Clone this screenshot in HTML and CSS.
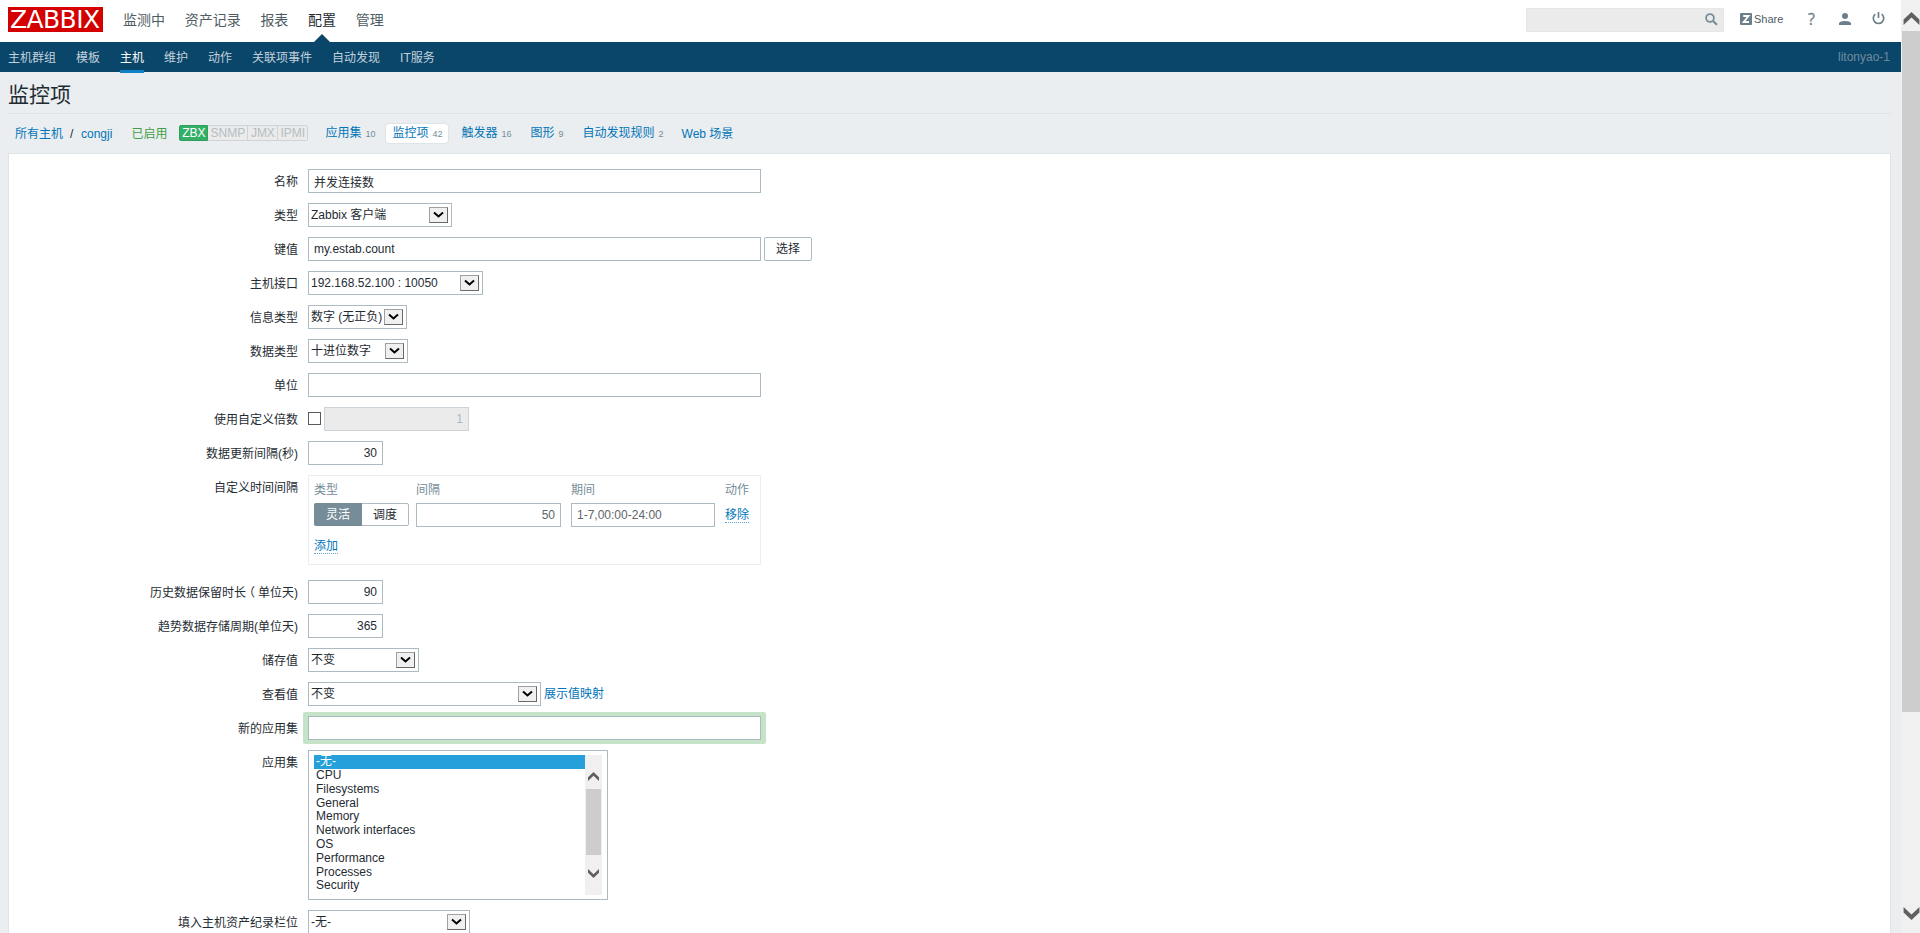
FILE: index.html
```html
<!DOCTYPE html>
<html lang="zh-CN">
<head>
    <meta charset="utf-8">
    <title>监控项</title>
    <link rel="stylesheet" href="styles.css">
</head>
<body>
    <svg width="0" height="0" class="defs">
        <symbol id="arrow" viewBox="0 0 11 8"><path d="M1 1.5l4.5 4 4.5-4" fill="none" stroke="#000" stroke-width="2"/></symbol>
        <symbol id="up" viewBox="0 0 11 9"><path d="M0 5.2L5.5 0 11 5.2V9L5.5 3.8 0 9z" fill="#606060"/></symbol>
        <symbol id="down" viewBox="0 0 11 9"><path d="M0 3.8L5.5 9 11 3.8V0L5.5 5.2 0 0z" fill="#606060"/></symbol>
    </svg>

    <div class="page">
        <header class="header">
            <a class="logo">ZABBIX</a>
            <nav class="top-nav">
                <a>监测中</a>
                <a>资产记录</a>
                <a>报表</a>
                <a class="selected">配置</a>
                <a>管理</a>
            </nav>
            <div class="search">
                <svg width="13" height="13" viewBox="0 0 13 13"><circle cx="5" cy="5" r="3.9" fill="none" stroke="#768d99" stroke-width="1.8"/><path d="M8 8l4 3.8" stroke="#768d99" stroke-width="2.2"/></svg>
            </div>
            <a class="share">
                <svg width="12" height="12" viewBox="0 0 12 12"><rect width="12" height="12" rx="1" fill="#6b7f8a"/><path d="M3.2 3h5.4L3.6 9h5.4" fill="none" stroke="#fff" stroke-width="1.8"/></svg>
                Share
            </a>
            <a class="help">?</a>
            <svg class="user-icon" width="12" height="12" viewBox="0 0 12 12"><circle cx="6" cy="3" r="3" fill="#6b7f8a"/><path d="M0 12V10Q1 8 6 8T12 10V12z" fill="#6b7f8a"/></svg>
            <svg class="power-icon" width="13" height="13" viewBox="0 0 13 13"><path d="M3.3 2.2A5.2 5.2 0 1 0 9.7 2.2M6.5 0V6" fill="none" stroke="#6b7f8a" stroke-width="1.7"/></svg>
        </header>

        <div class="sub-nav">
            <a>主机群组</a>
            <a>模板</a>
            <a class="selected">主机</a>
            <a>维护</a>
            <a>动作</a>
            <a>关联项事件</a>
            <a>自动发现</a>
            <a>IT服务</a>
            <span class="server-name">litonyao-1</span>
        </div>

        <div class="article">
            <h1>监控项</h1>
            <div class="filter-bar">
                <a>所有主机</a>
                <span class="slash">/</span>
                <a>congji</a>
                <span class="enabled">已启用</span>
                <div class="status">
                    <span class="on">ZBX</span><span class="snmp">SNMP</span><span class="jmx">JMX</span><span class="ipmi">IPMI</span>
                </div>
                <div class="tabs">
                    <a>应用集<sup>10</sup></a>
                    <a class="active">监控项<sup>42</sup></a>
                    <a>触发器<sup>16</sup></a>
                    <a>图形<sup>9</sup></a>
                    <a>自动发现规则<sup>2</sup></a>
                    <a class="web">Web 场景</a>
                </div>
            </div>

            <form class="form">
                <div class="row">
                    <label>名称</label>
                    <input class="wide" type="text" value="并发连接数">
                </div>
                <div class="row">
                    <label>类型</label>
                    <div class="select w-type"><span>Zabbix 客户端</span><i><svg width="11" height="8"><use href="#arrow"/></svg></i></div>
                </div>
                <div class="row">
                    <label>键值</label>
                    <input class="wide" type="text" value="my.estab.count">
                    <button class="btn" type="button">选择</button>
                </div>
                <div class="row">
                    <label>主机接口</label>
                    <div class="select w-interface"><span>192.168.52.100 : 10050</span><i><svg width="11" height="8"><use href="#arrow"/></svg></i></div>
                </div>
                <div class="row">
                    <label>信息类型</label>
                    <div class="select w-info"><span>数字 (无正负)</span><i><svg width="11" height="8"><use href="#arrow"/></svg></i></div>
                </div>
                <div class="row">
                    <label>数据类型</label>
                    <div class="select w-data"><span>十进位数字</span><i><svg width="11" height="8"><use href="#arrow"/></svg></i></div>
                </div>
                <div class="row">
                    <label>单位</label>
                    <input class="wide" type="text">
                </div>
                <div class="row">
                    <label>使用自定义倍数</label>
                    <span class="checkbox"></span>
                    <input class="medium" type="text" value="1" disabled>
                </div>
                <div class="row">
                    <label>数据更新间隔(秒)</label>
                    <input class="small" type="text" value="30">
                </div>
                <div class="row interval-row">
                    <label>自定义时间间隔</label>
                    <div class="intervals">
                        <span class="th">类型</span>
                        <span class="th">间隔</span>
                        <span class="th">期间</span>
                        <span class="th">动作</span>
                        <div class="segments"><span class="checked">灵活</span><span>调度</span></div>
                        <input class="medium grey" type="text" value="50">
                        <input class="period grey" type="text" value="1-7,00:00-24:00">
                        <div><a class="dotted">移除</a></div>
                        <div class="add"><a class="dotted">添加</a></div>
                    </div>
                </div>
                <div class="row">
                    <label>历史数据保留时长<span class="paren">（</span>单位天)</label>
                    <input class="small" type="text" value="90">
                </div>
                <div class="row">
                    <label>趋势数据存储周期(单位天)</label>
                    <input class="small" type="text" value="365">
                </div>
                <div class="row">
                    <label>储存值</label>
                    <div class="select w-store"><span>不变</span><i><svg width="11" height="8"><use href="#arrow"/></svg></i></div>
                </div>
                <div class="row">
                    <label>查看值</label>
                    <div class="select w-show"><span>不变</span><i><svg width="11" height="8"><use href="#arrow"/></svg></i></div>
                    <a class="map-link">展示值映射</a>
                </div>
                <div class="row">
                    <label>新的应用集</label>
                    <div class="focus"><input class="wide" type="text"></div>
                </div>
                <div class="row">
                    <label>应用集</label>
                    <div class="listbox">
                        <ul>
                            <li class="selected">-无-</li>
                            <li>CPU</li>
                            <li>Filesystems</li>
                            <li>General</li>
                            <li>Memory</li>
                            <li>Network interfaces</li>
                            <li>OS</li>
                            <li>Performance</li>
                            <li>Processes</li>
                            <li>Security</li>
                        </ul>
                        <div class="list-scroll">
                            <svg width="11" height="9"><use href="#up"/></svg>
                            <div class="thumb"></div>
                            <svg width="11" height="9"><use href="#down"/></svg>
                        </div>
                    </div>
                </div>
                <div class="row">
                    <label>填入主机资产纪录栏位</label>
                    <div class="select w-inventory"><span>-无-</span><i><svg width="11" height="8"><use href="#arrow"/></svg></i></div>
                </div>
            </form>
        </div>
    </div>

    <div class="scrollbar">
        <svg width="17" height="13"><use href="#up"/></svg>
        <div class="thumb"></div>
        <svg width="17" height="13"><use href="#down"/></svg>
    </div>
</body>
</html>
```
FILE: styles.css
```css
* {
    box-sizing: border-box;
}
body {
    margin: 0;
    height: 933px;
    display: flex;
    overflow: hidden;
    background: #ebeef0;
    color: #1f2c33;
    font: 12px/18px "Liberation Sans", "Noto Sans CJK SC", sans-serif;
}
a {
    color: #0275b8;
    white-space: nowrap;
}
.defs {
    position: absolute;
}
.page {
    width: 1901px;
    height: 933px;
    overflow: hidden;
}

/* header */
.header {
    height: 42px;
    background: #fff;
    display: flex;
    padding: 0 16px 0 8px;
}
.logo {
    width: 95px;
    height: 25px;
    margin-top: 7px;
    padding-left: 2px;
    background: #d40000;
    color: #fff;
    font: 25px/25px "DejaVu Sans", sans-serif;
    letter-spacing: -0.6px;
}
.top-nav {
    display: flex;
    gap: 19.7px;
    margin-left: 20px;
    font-size: 14px;
    line-height: 40px;
}
.top-nav a {
    color: #4f5c63;
}
.top-nav .selected {
    position: relative;
    color: #1f2c33;
}
.top-nav .selected::after {
    content: "";
    position: absolute;
    left: 6px;
    top: 34px;
    border: 8px solid transparent;
    border-top: 0;
    border-bottom-color: #0a466a;
}
.search {
    width: 198px;
    height: 24px;
    margin: 8px 16px 0 auto;
    padding: 4px 5px 0 0;
    border: 1px solid #e4e6e7;
    background: #ebebeb;
    text-align: right;
    line-height: 0;
}
.share {
    display: flex;
    gap: 2px;
    width: 68px;
    color: #4f5c63;
    font-size: 11px;
    line-height: 38px;
}
.share svg {
    margin-top: 13px;
}
.help {
    width: 31px;
    color: #6b7f8a;
    font: 16px/39px "Open Sans", sans-serif;
    -webkit-text-stroke: 0.3px #6b7f8a;
}
.user-icon {
    margin: 13px 21px 0 0;
}
.power-icon {
    margin-top: 12px;
}
.sub-nav {
    height: 30px;
    display: flex;
    gap: 20px;
    padding: 0 11px 0 8px;
    background: #0a466a;
    line-height: 32px;
}
.sub-nav a {
    color: #c3d1da;
}
.sub-nav .selected {
    height: 31px;
    color: #fff;
    border-bottom: 3px solid #0f81c9;
}
.server-name {
    margin-left: auto;
    color: #6f8b9d;
    line-height: 30px;
}

/* title and host bar */
.article {
    padding: 0 10px 0 8px;
}
h1 {
    margin: 0;
    height: 42px;
    font-size: 21px;
    font-weight: normal;
    line-height: 46px;
    border-bottom: 1px solid #dfe4e7;
}
.filter-bar {
    height: 39px;
    display: flex;
    padding: 9px 0 0 7px;
    line-height: 22px;
}
.slash {
    width: 18px;
    padding-left: 7px;
}
.enabled {
    margin-left: 19px;
    width: 48px;
    color: #429e47;
}
.status {
    display: flex;
    margin-top: 2px;
    height: 16px;
    line-height: 15px;
    color: #b4bec4;
}
.status span {
    height: 16px;
    border: 1px solid #ccd4d9;
    border-left: 0;
    background: #ebebeb;
    text-align: center;
}
.status .on {
    width: 29px;
    background: #34af67;
    border: 1px solid #2f9f5e;
    border-radius: 2px 0 0 2px;
    color: #fff;
}
.snmp {
    width: 40px;
}
.jmx {
    width: 30px;
}
.status .ipmi {
    width: 30px;
    border-radius: 0 2px 2px 0;
}
.tabs {
    display: flex;
    margin-left: 10px;
    line-height: 19px;
}
.tabs a {
    height: 21px;
    padding: 0 6px;
    border: 1px solid transparent;
    margin-right: -1px;
}
.tabs a + a {
    margin-left: 6px;
}
.tabs .active {
    margin-left: 4px;
    background: #fff;
    border-color: #dfe4e7;
    border-radius: 4px;
}
.tabs a + a.active {
    margin-left: 4px;
}
.tabs .web {
    padding-left: 5px;
    line-height: 21px;
}
.tabs sup {
    margin-left: 4px;
    color: #768d99;
    font-size: 9px;
    line-height: 0;
    vertical-align: baseline;
}

/* form */
.form {
    height: 900px;
    padding: 15px 0 0;
    border: 1px solid #dfe4e7;
    background: #fff;
}
.row {
    display: flex;
    margin-bottom: 10px;
}
.row label {
    width: 289px;
    height: 24px;
    margin-right: 10px;
    text-align: right;
    line-height: 26px;
}
.paren {
    position: relative;
    left: -3px;
}
input {
    height: 24px;
    margin: 0;
    padding: 0 5px;
    border: 1px solid #acbbc2;
    border-radius: 0;
    background: #fff;
    color: #1f2c33;
    font: inherit;
    outline: none;
}
.wide {
    width: 453px;
}
.medium {
    width: 145px;
    text-align: right;
}
.small {
    width: 75px;
    text-align: right;
}
.period {
    width: 144px;
}
.grey {
    color: #5c666b;
}
input:disabled {
    background: #ebebeb;
    border-color: #ccd4d9;
    color: #a8b9c2;
}
.btn {
    width: 48px;
    height: 24px;
    margin-left: 3px;
    padding: 0;
    border: 1px solid #acbbc2;
    border-radius: 2px;
    background: #fff;
    color: #1f2c33;
    font: inherit;
}
.select {
    display: flex;
    justify-content: space-between;
    height: 24px;
    padding: 3px 3px 0 2px;
    border: 1px solid #acbbc2;
    line-height: 16px;
    white-space: nowrap;
}
.select i {
    flex: none;
    width: 19px;
    height: 16px;
    border: 1px solid #a0a0a0;
    border-right-color: #696969;
    border-bottom-color: #696969;
    background: #f0f0f0;
    line-height: 0;
    padding: 3px 0 0 3px;
}
.w-type {
    width: 144px;
}
.w-interface {
    width: 175px;
}
.w-info {
    width: 99px;
}
.w-data {
    width: 100px;
}
.w-store {
    width: 111px;
}
.w-show {
    width: 233px;
}
.w-inventory {
    width: 162px;
}
.checkbox {
    width: 13px;
    height: 13px;
    margin: 5px 3px 0 0;
    border: 1px solid #5a5a5a;
    background: #fff;
}
.row.interval-row {
    margin-bottom: 15px;
}
.intervals {
    display: grid;
    grid-template-columns: 102px 155px 154px 30px;
    grid-template-rows: 23px 24px 1fr;
    width: 453px;
    height: 90px;
    padding: 4px 5px;
    border: 1px solid #ebeef0;
}
.th {
    color: #768d99;
    line-height: 20px;
}
.segments {
    display: flex;
    width: 95px;
    height: 23px;
    border: 1px solid #acbbc2;
    border-radius: 2px;
    line-height: 22px;
    text-align: center;
}
.segments span {
    flex: 1;
}
.segments .checked {
    flex: none;
    width: 48px;
    margin: -1px 0 -1px -1px;
    border-radius: 2px 0 0 2px;
    background: #768d99;
    color: #fff;
    line-height: 24px;
}
.dotted {
    display: block;
    width: 24px;
    height: 17px;
    margin-top: 3px;
    line-height: 18px;
    border-bottom: 1px dotted #5ba5cf;
}
.add {
    padding-top: 7px;
}
.map-link {
    margin-left: 3px;
    line-height: 24px;
}
.focus {
    display: flex;
    margin: -4px -5px;
    padding: 4px 5px;
    border-radius: 2px;
    background: #c5e4c7;
}
.listbox {
    display: flex;
    width: 300px;
    height: 150px;
    padding: 4px 5px;
    border: 1px solid #acbbc2;
}
.listbox ul {
    flex: 1;
    margin: 0;
    padding: 0;
    list-style: none;
}
.listbox li {
    height: 13.8px;
    padding-left: 2px;
    line-height: 13px;
}
.listbox .selected {
    height: 14px;
    background: #26a0da;
    color: #fff;
}
.list-scroll {
    width: 17px;
    height: 140px;
    padding: 17px 0;
    background: #f0f0f0;
    display: flex;
    flex-direction: column;
    align-items: center;
}
.list-scroll .thumb {
    width: 15px;
    height: 66px;
    margin: 8px 0 14px;
    background: #cdcdcd;
}

.scrollbar {
    width: 19px;
    height: 933px;
    padding: 12px 0 13px 1px;
    background: #f0f0f0;
    display: flex;
    flex-direction: column;
    align-items: center;
}
.scrollbar .thumb {
    width: 18px;
    height: 681px;
    margin: 6px 0 auto;
    background: #cdcdcd;
}
```
